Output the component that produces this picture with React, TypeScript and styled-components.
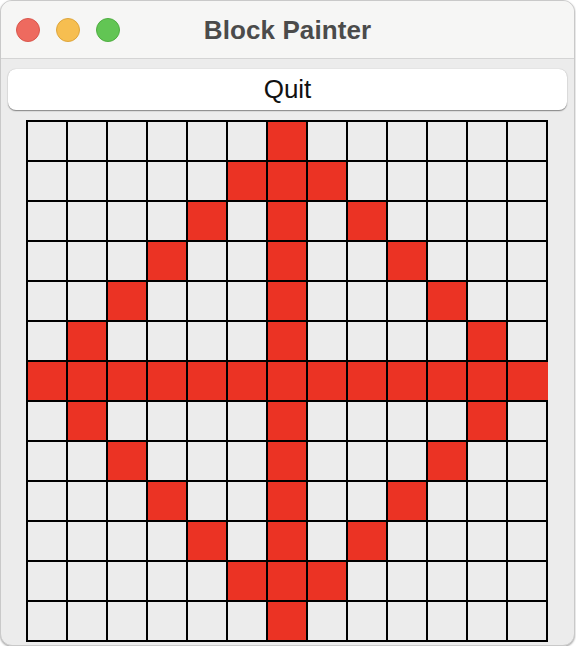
import React from "react";
import styled, { createGlobalStyle } from "styled-components";

const GlobalStyle = createGlobalStyle`
  html, body {
    margin: 0;
    padding: 0;
    background: #ffffff;
  }
  body {
    font-family: "Liberation Sans", Arial, sans-serif;
  }
`;

const Window = styled.div`
  box-sizing: border-box;
  width: 575px;
  height: 646px;
  border-radius: 12px;
  border: 1px solid #c9c9c9;
  background: #ececec;
  box-shadow: 0 1px 2px rgba(0, 0, 0, 0.35);
  overflow: hidden;
  display: flex;
  flex-direction: column;
`;

const TitleBar = styled.div`
  box-sizing: border-box;
  height: 58px;
  flex: none;
  background: #f6f6f5;
  border-bottom: 1px solid #d4d4d4;
  display: grid;
  grid-template-columns: 1fr auto 1fr;
  align-items: center;
`;

const Lights = styled.div`
  display: flex;
  gap: 16px;
  padding-left: 15px;
  padding-top: 1px;
`;

const Light = styled.span<{ $color: string; $edge: string }>`
  width: 24px;
  height: 24px;
  border-radius: 50%;
  box-sizing: border-box;
  background: ${(p) => p.$color};
  border: 1px solid ${(p) => p.$edge};
`;

const Title = styled.div`
  font-family: "Liberation Sans", Arial, sans-serif;
  font-weight: 700;
  font-size: 26px;
  color: #4b4b4b;
  padding-top: 1px;
  letter-spacing: 0.1px;
`;

const Content = styled.div`
  display: flex;
  flex-direction: column;
  align-items: center;
  gap: 10px;
  padding: 10px 7px 0 7px;
`;

const QuitButton = styled.button`
  box-sizing: border-box;
  width: 100%;
  height: 41px;
  border: none;
  border-radius: 8px;
  background: #ffffff;
  box-shadow: 0 0.5px 1px rgba(0, 0, 0, 0.25), 0 1px 1.5px rgba(0, 0, 0, 0.25);
  font-family: "Liberation Sans", Arial, sans-serif;
  font-size: 26px;
  color: #111111;
  padding: 0;
  line-height: 41px;
  cursor: default;
`;

const Board = styled.div`
  display: grid;
  grid-template-columns: repeat(13, 38px);
  grid-auto-rows: 38px;
  gap: 2px;
  padding: 2px;
  background: #000000;
  margin-left: -2px;
`;

const Cell = styled.div<{ $on: boolean; $overflow?: boolean }>`
  background: ${(p) => (p.$on ? "#eb3324" : "#ececec")};
  margin-right: ${(p) => (p.$overflow ? "-2px" : "0")};
`;

const N = 13;
const C = 6;

function isOn(r: number, c: number): boolean {
  if (r === C || c === C) return true;
  const dr = Math.abs(r - C);
  const dc = Math.abs(c - C);
  return dr + dc === C;
}

export default function App() {
  const cells: React.ReactNode[] = [];
  for (let r = 0; r < N; r++) {
    for (let c = 0; c < N; c++) {
      cells.push(
        <Cell key={`${r}-${c}`} $on={isOn(r, c)} $overflow={r === C && c === N - 1} />
      );
    }
  }
  return (
    <>
      <GlobalStyle />
      <Window>
        <TitleBar>
          <Lights>
            <Light $color="#ee6a5f" $edge="#d9574d" />
            <Light $color="#f6be50" $edge="#dea63c" />
            <Light $color="#62c554" $edge="#4fae41" />
          </Lights>
          <Title>Block Painter</Title>
          <div />
        </TitleBar>
        <Content>
          <QuitButton>Quit</QuitButton>
          <Board>{cells}</Board>
        </Content>
      </Window>
    </>
  );
}
